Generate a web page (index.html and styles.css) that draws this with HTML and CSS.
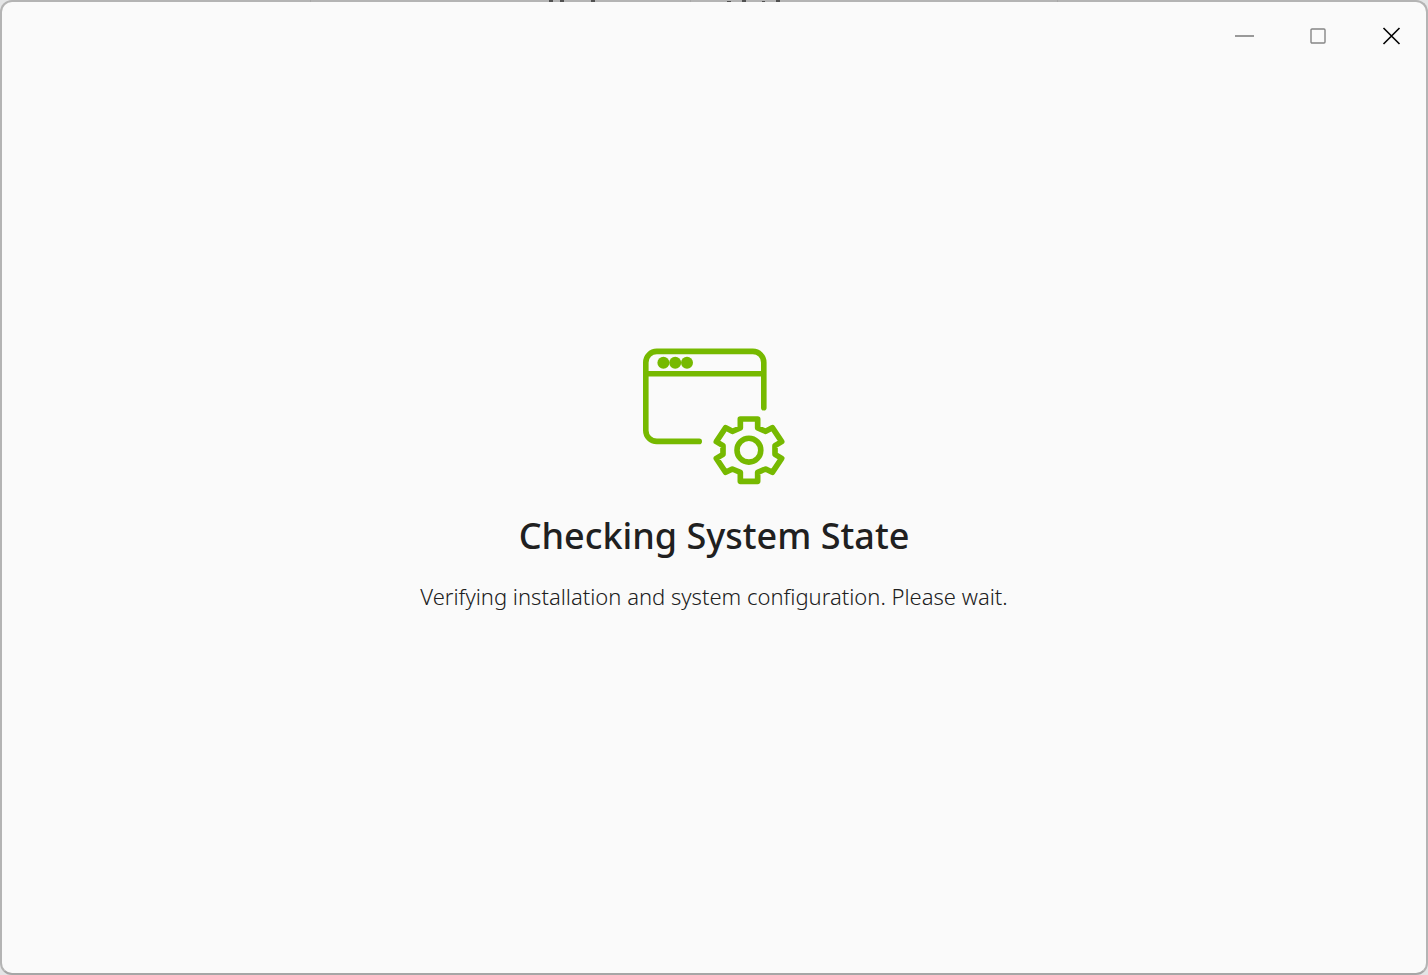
FILE: index.html
```html
<!DOCTYPE html>
<html lang="en">
<head>
<meta charset="utf-8">
<title>Checking System State</title>
<link rel="stylesheet" href="styles.css">
</head>
<body>
<div class="window">
  <svg class="edge" width="748" height="2" viewBox="311 0 748 2" aria-hidden="true">
    <path stroke="#a8a8a8" stroke-width="1" d="M311.500 0V2M691.500 0V2M1058.500 0V2"/>
    <path stroke="#505050" stroke-width="2" d="M550 1h4M561 1h4M592 1h4M743 1h4M777 1h4"/>
    <path stroke="#505050" stroke-width="1" d="M728 1.500h4M763 1.500h3"/>
  </svg>
  <header class="titlebar">
    <button class="control" type="button" aria-label="Minimize">
      <svg width="20" height="20" viewBox="0 0 20 20"><path d="M0 10H19" stroke="#999" stroke-width="2"/></svg>
    </button>
    <button class="control" type="button" aria-label="Maximize">
      <svg width="20" height="20" viewBox="0 0 20 20"><rect x="3" y="3" width="14" height="14" rx="1" stroke="#858585" stroke-width="1.400"/></svg>
    </button>
    <button class="control" type="button" aria-label="Close">
      <svg width="20" height="20" viewBox="0 0 20 20"><path d="M2.500 2L18.500 18M18.500 2L2.500 18" stroke="#000" stroke-width="1.600"/></svg>
    </button>
  </header>
  <main class="status">
    <svg class="status-icon" width="144" height="138" viewBox="642 348 144 138" aria-hidden="true">
      <path d="M763.800 407.700V362.400a11 11 0 0 0-11-11H656.800a11 11 0 0 0-11 11V430.400a11 11 0 0 0 11 11H699.200M645.800 373.800H763.800"/>
      <g class="dots"><circle cx="663.400" cy="362.700" r="6"/><circle cx="675.200" cy="362.700" r="6"/><circle cx="687" cy="362.700" r="6"/></g>
      <path transform="translate(704 406) scale(.33333)" stroke-width="17" d="M109 39H161V66L185 76L205 65L233 107L213 119V145L233 157L205 199L185 189L161 199V226H109V199L85 189L65 199L37 157L57 145V119L37 107L65 65L85 76L109 66Z"/>
      <circle cx="748.900" cy="450.200" r="11.900"/>
    </svg>
    <h1 class="title">Checking System State</h1>
    <p class="message">Verifying installation and system configuration. Please wait.</p>
  </main>
</div>
</body>
</html>
```
FILE: styles.css
```css
* {
  box-sizing: border-box;
}

body {
  margin: 0;
  background: #e4e5e6;
  color: #202020;
  font-family: "Noto Sans", "Open Sans", sans-serif;
}

.window {
  position: relative;
  display: flex;
  flex-direction: column;
  min-height: 100vh;
  border: 2px solid #b4b4b4;
  border-bottom-color: #a6a6a6;
  border-radius: 12px;
  background: #fafafa;
}

/* Content behind the window showing through its translucent top border */
.edge {
  position: absolute;
  top: -2px;
  left: calc(50% - 404px);
}

.titlebar {
  display: flex;
  justify-content: flex-end;
  gap: 3px;
}

.control {
  display: grid;
  place-items: center;
  width: 70px;
  height: 68px;
  padding: 0;
  border: 0;
  background: none;
}

.control svg {
  fill: none;
}

.status {
  display: flex;
  flex: 1;
  flex-direction: column;
  align-items: center;
  justify-content: center;
  padding-bottom: 84px;
  text-align: center;
}

.status-icon {
  fill: none;
  stroke: #76b900;
  stroke-width: 5.600;
  stroke-linecap: round;
  stroke-linejoin: round;
}

.dots {
  fill: #76b900;
  stroke: none;
}

.title {
  margin: 26px 0 0;
  font-size: 36px;
  font-weight: 500;
  line-height: 48px;
}

.message {
  margin: 20px 0 0;
  font-size: 22px;
  font-weight: 300;
  line-height: 32px;
}
```
